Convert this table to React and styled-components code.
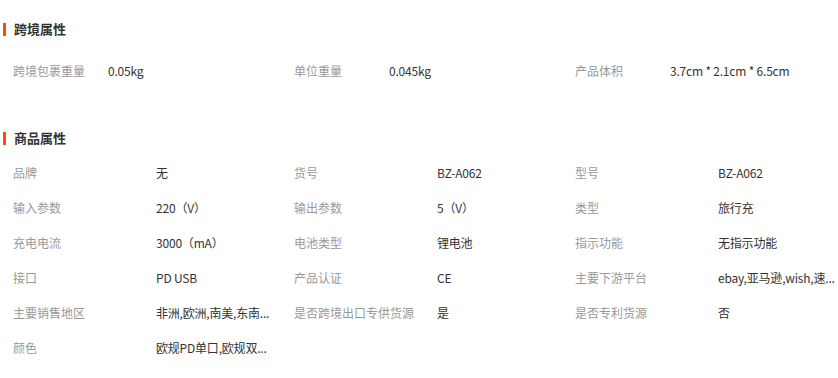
import styled, { createGlobalStyle } from "styled-components";

const crossBorder = [
  ["跨境包裹重量", "0.05kg"],
  ["单位重量", "0.045kg"],
  ["产品体积", "3.7cm * 2.1cm * 6.5cm"],
];

// values are shown cut short, the way the list shows them
const goods = [
  ["品牌", "无"],
  ["货号", "BZ-A062"],
  ["型号", "BZ-A062"],
  ["输入参数", "220（V）"],
  ["输出参数", "5（V）"],
  ["类型", "旅行充"],
  ["充电电流", "3000（mA）"],
  ["电池类型", "锂电池"],
  ["指示功能", "无指示功能"],
  ["接口", "PD USB"],
  ["产品认证", "CE"],
  ["主要下游平台", "ebay,亚马逊,wish,速..."],
  ["主要销售地区", "非洲,欧洲,南美,东南..."],
  ["是否跨境出口专供货源", "是"],
  ["是否专利货源", "否"],
  ["颜色", "欧规PD单口,欧规双..."],
];

export default function App() {
  return (
    <>
      <GlobalStyle />
      <Page>
        <Section>
          <Title>跨境属性</Title>
          <Grid $gap={17}>
            {crossBorder.map(([k, v]) => (
              <Cell key={k}>
                <Label $width={95}>{k}</Label>
                <Value>{v}</Value>
              </Cell>
            ))}
          </Grid>
        </Section>
        <Section $top={43}>
          <Title>商品属性</Title>
          <Grid $gap={10}>
            {goods.map(([k, v]) => (
              <Cell key={k}>
                <Label $width={143}>{k}</Label>
                <Value>{v}</Value>
              </Cell>
            ))}
          </Grid>
        </Section>
      </Page>
    </>
  );
}

const GlobalStyle = createGlobalStyle`
  html, body {
    margin: 0;
    background: #fff;
  }
  body {
    font-family: "Noto Sans CJK SC", "Noto Sans", sans-serif;
    font-size: 12px;
    color: #333;
  }
`;

const Page = styled.div`
  width: 838px;
  height: 378px;
  overflow: hidden;
  padding-top: 22px;
  box-sizing: border-box;
`;

const Section = styled.section`
  margin-top: ${(p) => p.$top || 0}px;
`;

const Title = styled.h3`
  margin: 0;
  display: flex;
  align-items: center;
  gap: 8px;
  padding-left: 3px;
  height: 14px;
  font-size: 13px;
  font-weight: bold;
  line-height: 14px;
  color: #333;

  &::before {
    content: "";
    width: 3px;
    height: 13px;
    background: #ff4a00;
  }
`;

const Grid = styled.div`
  display: grid;
  grid-template-columns: 281px 281px 263px;
  margin-top: ${(p) => p.$gap}px;
  padding-left: 13px;
`;

const Cell = styled.div`
  display: flex;
  height: 35px;
  line-height: 35px;
  white-space: nowrap;
`;

const Label = styled.span`
  flex: none;
  width: ${(p) => p.$width}px;
  color: #999;
`;

const Value = styled.span`
  color: #333;
  letter-spacing: -0.2px;
`;
